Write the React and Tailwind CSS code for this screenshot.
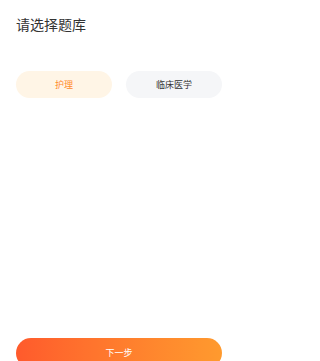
export default function App() {
  return (
    <div
      className="flex w-[236px] flex-col bg-white pl-4 pr-[14px] pt-[15px]"
      style={{ fontFamily: '"Noto Sans CJK SC", "Noto Sans", sans-serif' }}
    >
      <h1 className="text-[14px] leading-[18px] font-normal text-[#333333]">请选择题库</h1>
      <div className="mt-[38px] grid grid-cols-2 gap-[14px]">
        <button className="flex h-[27px] items-center justify-center rounded-full bg-[#fff5e6] text-[9px] text-[#ff8a2b]">
          护理
        </button>
        <button className="flex h-[27px] items-center justify-center rounded-full bg-[#f5f6f8] text-[9px] text-[#333333]">
          临床医学
        </button>
      </div>
      <button className="mt-[240px] mb-4 flex h-[30px] items-center justify-center rounded-full bg-gradient-to-r from-[#ff5a2c] to-[#ff9a2e] text-[9px] text-white">
        下一步
      </button>
    </div>
  );
}
